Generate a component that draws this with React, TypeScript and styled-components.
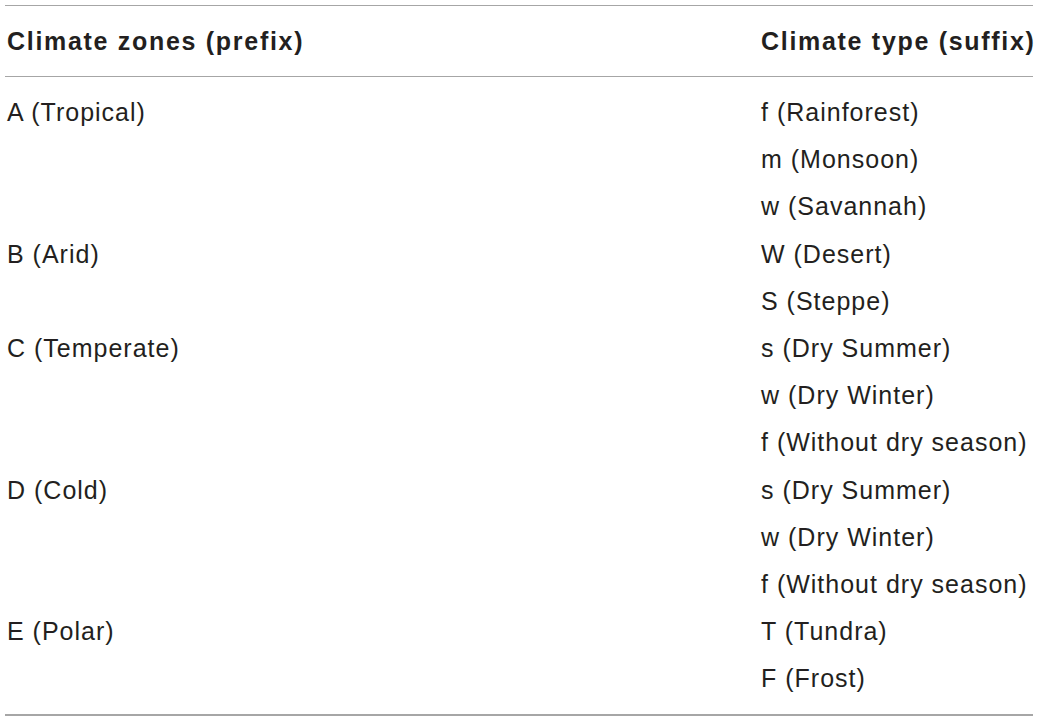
import React from "react";
import styled, { createGlobalStyle } from "styled-components";

const Global = createGlobalStyle`
  html, body { margin: 0; padding: 0; background: #ffffff; }
  body { font-family: "Liberation Sans", Arial, sans-serif; color: #231f20; }
`;

const Table = styled.div`
  margin: 5px 0 0 5px;
  width: 1028px;
  border-top: 1.5px solid #a6a6a6;
  border-bottom: 2px solid #a6a6a6;
`;

const HeaderRow = styled.div`
  display: grid;
  grid-template-columns: 754px 1fr;
  height: 70px;
  align-items: center;
  border-bottom: 1.5px solid #a6a6a6;
`;

const HeadCell = styled.div`
  font-weight: 700;
  font-size: 25px;
  letter-spacing: 1.7px;
  padding-left: 2px;
  white-space: nowrap;
`;

const Body = styled.div`
  padding: 12px 0 12px;
`;

const Row = styled.div`
  display: grid;
  grid-template-columns: 754px 1fr;
  height: 47.2px;
  align-items: center;
`;

const Cell = styled.div`
  font-size: 25px;
  letter-spacing: 1px;
  padding-left: 2px;
  white-space: nowrap;
`;

const rows: [string, string][] = [
  ["A (Tropical)", "f (Rainforest)"],
  ["", "m (Monsoon)"],
  ["", "w (Savannah)"],
  ["B (Arid)", "W (Desert)"],
  ["", "S (Steppe)"],
  ["C (Temperate)", "s (Dry Summer)"],
  ["", "w (Dry Winter)"],
  ["", "f (Without dry season)"],
  ["D (Cold)", "s (Dry Summer)"],
  ["", "w (Dry Winter)"],
  ["", "f (Without dry season)"],
  ["E (Polar)", "T (Tundra)"],
  ["", "F (Frost)"],
];

export default function App() {
  return (
    <>
      <Global />
      <Table>
        <HeaderRow>
          <HeadCell>Climate zones (prefix)</HeadCell>
          <HeadCell>Climate type (suffix)</HeadCell>
        </HeaderRow>
        <Body>
          {rows.map(([a, b], i) => (
            <Row key={i}>
              <Cell>{a}</Cell>
              <Cell>{b}</Cell>
            </Row>
          ))}
        </Body>
      </Table>
    </>
  );
}
